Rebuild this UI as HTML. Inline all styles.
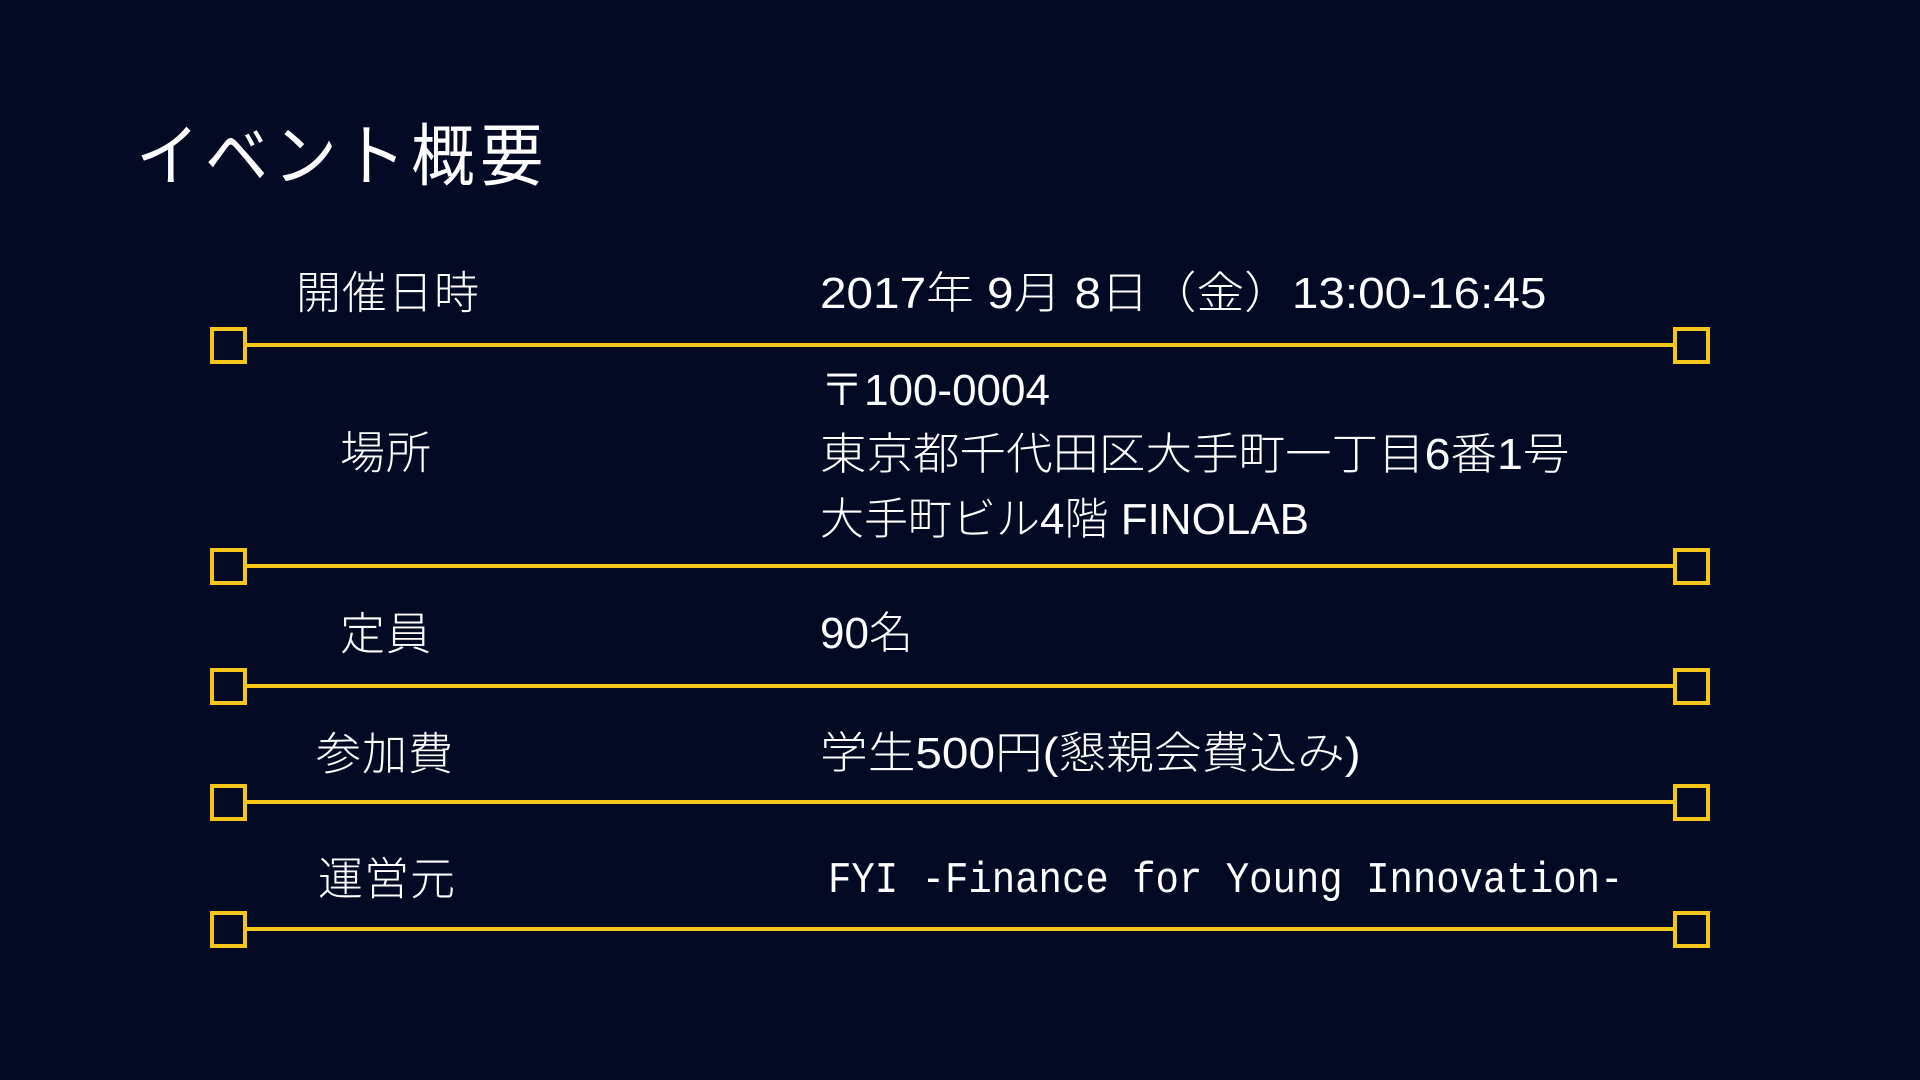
<!DOCTYPE html>
<html><head><meta charset="utf-8"><style>
html,body{margin:0;padding:0}
body{width:1920px;height:1080px;background:#050a24;position:relative;overflow:hidden;color:#fff;font-family:"Liberation Sans","Noto Sans CJK JP",sans-serif;}
.t{position:absolute;white-space:nowrap;line-height:1;transform-origin:left center;font-weight:300}
.title{left:136px;top:157px;font-size:68px;letter-spacing:6px;font-weight:400;transform:translateY(-50%) scaleX(0.93)}
.lab{font-size:45px;letter-spacing:1px;transform:translateY(-50%)}
.val{font-size:44px;left:820px;transform:translateY(-50%)}
.line{position:absolute;left:228px;width:1462px;height:4px;background:#f5c518}
.sq{position:absolute;width:29px;height:29px;border:4px solid #f5c518;background:#050a24}
</style></head><body>
<div class="t title">イベント概要</div>

<div class="t lab" style="left:296px;top:293px">開催日時</div>
<div class="t val" style="top:294px;transform:translateY(-50%) scaleX(1.084)">2017年 9月 8日（金）13:00-16:45</div>

<div class="t lab" style="left:340px;top:453px">場所</div>
<div class="t val" style="top:391px">〒100-0004</div>
<div class="t val" style="top:455px;transform:translateY(-50%) scaleX(1.057)">東京都千代田区大手町一丁目6番1号</div>
<div class="t val" style="top:520px">大手町ビル4階 FINOLAB</div>

<div class="t lab" style="left:340px;top:634px">定員</div>
<div class="t val" style="top:634px">90名</div>

<div class="t lab" style="left:316px;top:754px">参加費</div>
<div class="t val" style="top:754px;transform:translateY(-50%) scaleX(1.084)">学生500円(懇親会費込み)</div>

<div class="t lab" style="left:318px;top:879px">運営元</div>
<div class="t val" style="left:828px;top:881px;font-family:'Liberation Mono',monospace;transform:translateY(-50%) scaleX(0.886)">FYI -Finance for Young Innovation-</div>

<div class="line" style="top:343px"></div>
<div class="sq" style="left:210px;top:327px"></div><div class="sq" style="left:1673px;top:327px"></div>
<div class="line" style="top:564px"></div>
<div class="sq" style="left:210px;top:548px"></div><div class="sq" style="left:1673px;top:548px"></div>
<div class="line" style="top:684px"></div>
<div class="sq" style="left:210px;top:668px"></div><div class="sq" style="left:1673px;top:668px"></div>
<div class="line" style="top:800px"></div>
<div class="sq" style="left:210px;top:784px"></div><div class="sq" style="left:1673px;top:784px"></div>
<div class="line" style="top:927px"></div>
<div class="sq" style="left:210px;top:911px"></div><div class="sq" style="left:1673px;top:911px"></div>
</body></html>
